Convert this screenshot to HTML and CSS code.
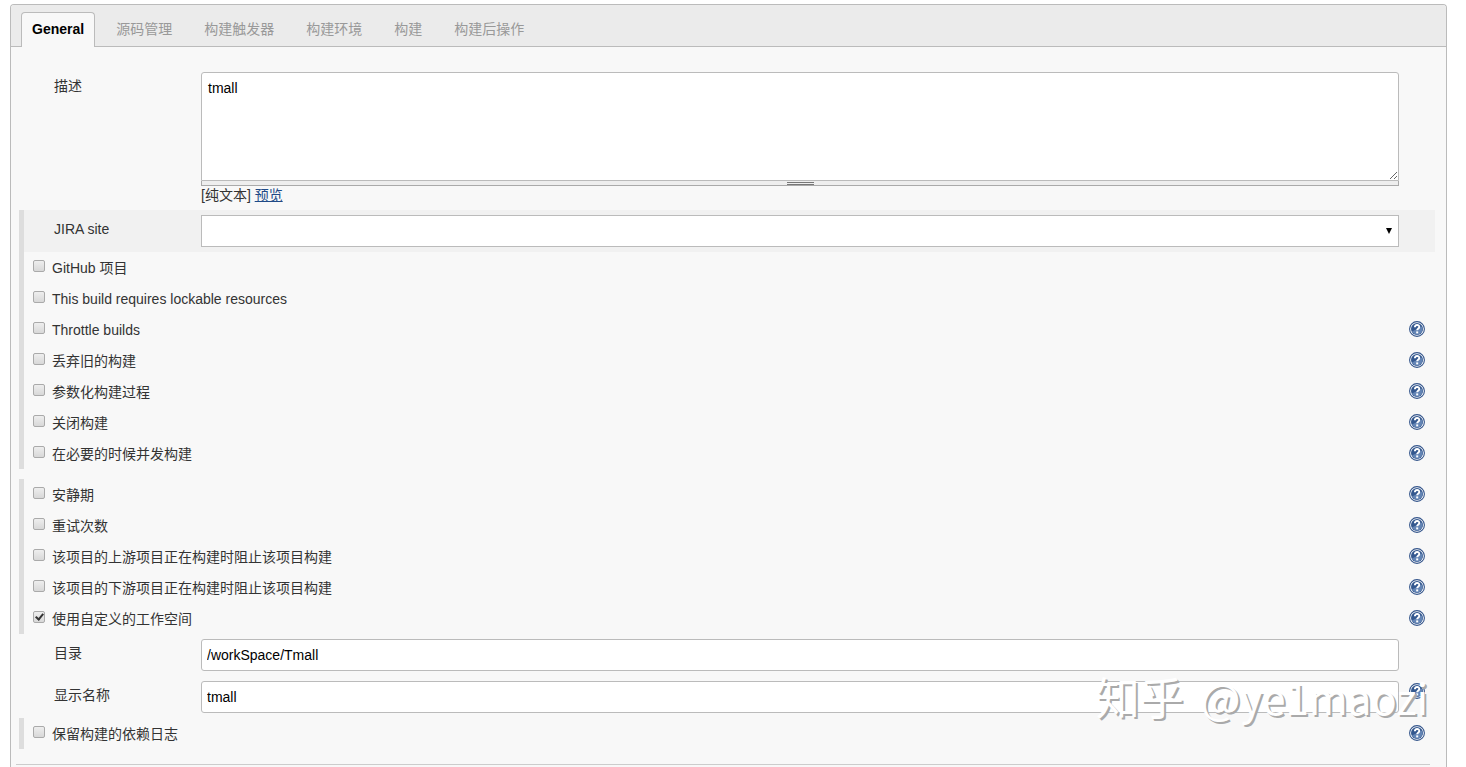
FILE: index.html
```html
<!DOCTYPE html>
<html lang="zh-CN">
<head>
    <meta charset="UTF-8">
    <meta name="viewport" content="width=device-width, initial-scale=1.0">
    <title>tmall Config</title>
    <link rel="stylesheet" href="styles.css">
</head>
<body>

    <!-- Shared help icon -->
    <svg class="sprite" aria-hidden="true">
        <symbol id="help-icon" viewBox="0 0 16 16">
            <circle cx="8" cy="8" r="7.4" fill="#fff" stroke="#34558b" stroke-width="1.1"/>
            <circle cx="8" cy="8" r="6" fill="#34588f"/>
            <path d="M3 10.5a5.5 5.5 0 0 0 10-5z" fill="#6485b5"/>
            <path d="M5.9 6.3c0-3 4.4-3 4.4-.4 0 1.5-2.1 1.6-2.1 3.4" fill="none" stroke="#fff" stroke-width="1.9"/>
            <rect x="7.2" y="10.4" width="2" height="2" fill="#fff"/>
        </symbol>
    </svg>

    <div class="config">
        <nav class="tab-bar">
            <a href="#" class="tab active">General</a>
            <a href="#" class="tab">源码管理</a>
            <a href="#" class="tab">构建触发器</a>
            <a href="#" class="tab">构建环境</a>
            <a href="#" class="tab">构建</a>
            <a href="#" class="tab">构建后操作</a>
        </nav>

        <form class="config-form">
            <div class="field-row">
                <label class="field-label" for="description">描述</label>
                <div class="field">
                    <textarea id="description" class="description">tmall</textarea>
                    <div class="resize-handle"></div>
                    <div class="preview-line">[纯文本] <a href="#">预览</a></div>
                </div>
            </div>

            <div class="group">
                <div class="field-row shaded">
                    <label class="field-label" for="jira">JIRA site</label>
                    <div class="field select-wrap">
                        <select id="jira"><option></option></select>
                    </div>
                </div>
                <div class="check-row">
                    <label><input type="checkbox">GitHub 项目</label>
                </div>
                <div class="check-row">
                    <label><input type="checkbox">This build requires lockable resources</label>
                </div>
                <div class="check-row">
                    <label><input type="checkbox">Throttle builds</label>
                    <a href="#" class="help" aria-label="Help"><svg><use href="#help-icon"/></svg></a>
                </div>
                <div class="check-row">
                    <label><input type="checkbox">丢弃旧的构建</label>
                    <a href="#" class="help" aria-label="Help"><svg><use href="#help-icon"/></svg></a>
                </div>
                <div class="check-row">
                    <label><input type="checkbox">参数化构建过程</label>
                    <a href="#" class="help" aria-label="Help"><svg><use href="#help-icon"/></svg></a>
                </div>
                <div class="check-row">
                    <label><input type="checkbox">关闭构建</label>
                    <a href="#" class="help" aria-label="Help"><svg><use href="#help-icon"/></svg></a>
                </div>
                <div class="check-row">
                    <label><input type="checkbox">在必要的时候并发构建</label>
                    <a href="#" class="help" aria-label="Help"><svg><use href="#help-icon"/></svg></a>
                </div>
            </div>

            <div class="group spaced">
                <div class="check-row">
                    <label><input type="checkbox">安静期</label>
                    <a href="#" class="help" aria-label="Help"><svg><use href="#help-icon"/></svg></a>
                </div>
                <div class="check-row">
                    <label><input type="checkbox">重试次数</label>
                    <a href="#" class="help" aria-label="Help"><svg><use href="#help-icon"/></svg></a>
                </div>
                <div class="check-row">
                    <label><input type="checkbox">该项目的上游项目正在构建时阻止该项目构建</label>
                    <a href="#" class="help" aria-label="Help"><svg><use href="#help-icon"/></svg></a>
                </div>
                <div class="check-row">
                    <label><input type="checkbox">该项目的下游项目正在构建时阻止该项目构建</label>
                    <a href="#" class="help" aria-label="Help"><svg><use href="#help-icon"/></svg></a>
                </div>
                <div class="check-row">
                    <label><input type="checkbox" checked>使用自定义的工作空间</label>
                    <a href="#" class="help" aria-label="Help"><svg><use href="#help-icon"/></svg></a>
                </div>
            </div>

            <div class="field-row">
                <label class="field-label" for="directory">目录</label>
                <div class="field"><input type="text" id="directory" value="/workSpace/Tmall"></div>
            </div>
            <div class="field-row">
                <label class="field-label" for="displayName">显示名称</label>
                <div class="field"><input type="text" id="displayName" value="tmall"></div>
                <a href="#" class="help" aria-label="Help"><svg><use href="#help-icon"/></svg></a>
            </div>

            <div class="group">
                <div class="check-row">
                    <label><input type="checkbox">保留构建的依赖日志</label>
                    <a href="#" class="help" aria-label="Help"><svg><use href="#help-icon"/></svg></a>
                </div>
            </div>
        </form>
        <hr class="section-end">
    </div>

    <div class="watermark">
        <span class="site">知乎</span>
        <span class="user">@ye1maozi</span>
    </div>

</body>
</html>
```

FILE: styles.css
```css
*,
*::before,
*::after {
    box-sizing: border-box;
}

body {
    position: relative;
    display: flex;
    flex-direction: column;
    min-height: 100vh;
    margin: 0;
    padding: 4px 19px 0 10px;
    background: #fff;
    color: #333;
    font-family: "Liberation Sans", "Noto Sans CJK SC", sans-serif;
    font-size: 14px;
    line-height: 20px;
}

.sprite {
    position: absolute;
    width: 0;
    height: 0;
}

.config {
    flex: 1;
    border: 1px solid #bbb;
    border-bottom: 0;
    border-radius: 4px 4px 0 0;
    background: #f8f8f8;
}

/* Tabs */
.tab-bar {
    display: flex;
    gap: 10px;
    padding: 7px 10px 0;
    border-bottom: 1px solid #bbb;
    border-radius: 3px 3px 0 0;
    background: #ebebeb;
}

.tab {
    height: 35px;
    margin-bottom: -1px;
    padding: 0 10px;
    border: 1px solid transparent;
    border-bottom: 0;
    border-radius: 4px 4px 0 0;
    color: #999;
    line-height: 33px;
    text-decoration: none;
}

.tab.active {
    border-color: #bbb;
    background: #f8f8f8;
    color: #000;
    font-weight: bold;
}

/* Form */
.config-form {
    padding: 20px 11px 0 8px;
}

.group {
    border-left: 5px solid #ddd;
}

.group.spaced {
    margin-top: 10px;
}

.field-row {
    display: grid;
    grid-template-columns: 147px 1fr 36px;
    padding: 5px 0 5px 35px;
}

.group .field-row {
    padding-left: 30px;
}

.shaded {
    background: #f1f1f1;
}

.field-label {
    line-height: 28px;
}

textarea,
select,
input[type="text"] {
    display: block;
    width: 100%;
    height: 32px;
    margin: 0;
    padding: 5px;
    border: 1px solid #bbb;
    border-radius: 3px;
    background: #fff;
    color: #000;
    font: inherit;
}

textarea.description {
    height: 109px;
    padding: 5px 6px;
    border-radius: 3px 3px 0 0;
}

.resize-handle {
    height: 5px;
    padding-top: 1px;
    border: 1px solid #aaa;
    border-top: 0;
    background: #eee;
}

.resize-handle::before {
    content: "";
    display: block;
    width: 27px;
    height: 3px;
    margin: 0 auto;
    border: solid #777;
    border-width: 1px 0;
}

.preview-line {
    height: 19px;
    line-height: 19px;
}

.preview-line a {
    color: #204a87;
}

.select-wrap {
    position: relative;
}

select {
    appearance: none;
    border-radius: 0;
}

.select-wrap::after {
    content: "";
    position: absolute;
    top: 13px;
    right: 7px;
    border: solid transparent;
    border-width: 6px 3px 0;
    border-top-color: #000;
    pointer-events: none;
}

/* Checkbox rows */
.check-row {
    display: flex;
    align-items: center;
    justify-content: space-between;
    height: 31px;
    padding-left: 9px;
}

.check-row label {
    display: flex;
    gap: 7px;
}

input[type="checkbox"] {
    appearance: none;
    width: 12px;
    height: 12px;
    margin: 2px 0 0;
    border: 1px solid #aaa;
    border-radius: 2px;
    background: linear-gradient(#eee, #d8d8d8);
}

input[type="checkbox"]:checked::after {
    content: "";
    display: block;
    width: 5px;
    height: 8px;
    margin-left: 3px;
    border: solid #333;
    border-width: 0 2px 2px 0;
    transform: rotate(40deg);
}

.help {
    display: flex;
    justify-content: center;
    width: 36px;
}

.check-row .help {
    padding-bottom: 2px;
}

.field-row .help {
    padding-top: 2px;
}

.help svg {
    width: 16px;
    height: 16px;
}

.section-end {
    height: 1px;
    margin: 15px 16px 0 5px;
    border: 0;
    background: #ccc;
}

.watermark {
    position: absolute;
    right: 38px;
    bottom: 40px;
    display: flex;
    align-items: baseline;
    gap: 17px;
    color: #fff;
    font-family: "Noto Sans CJK SC", sans-serif;
    line-height: 60px;
    text-shadow: 2px 2px 0 #aaa;
    pointer-events: none;
}

.watermark .site {
    font-size: 44px;
}

.watermark .user {
    font-size: 42px;
}
```
